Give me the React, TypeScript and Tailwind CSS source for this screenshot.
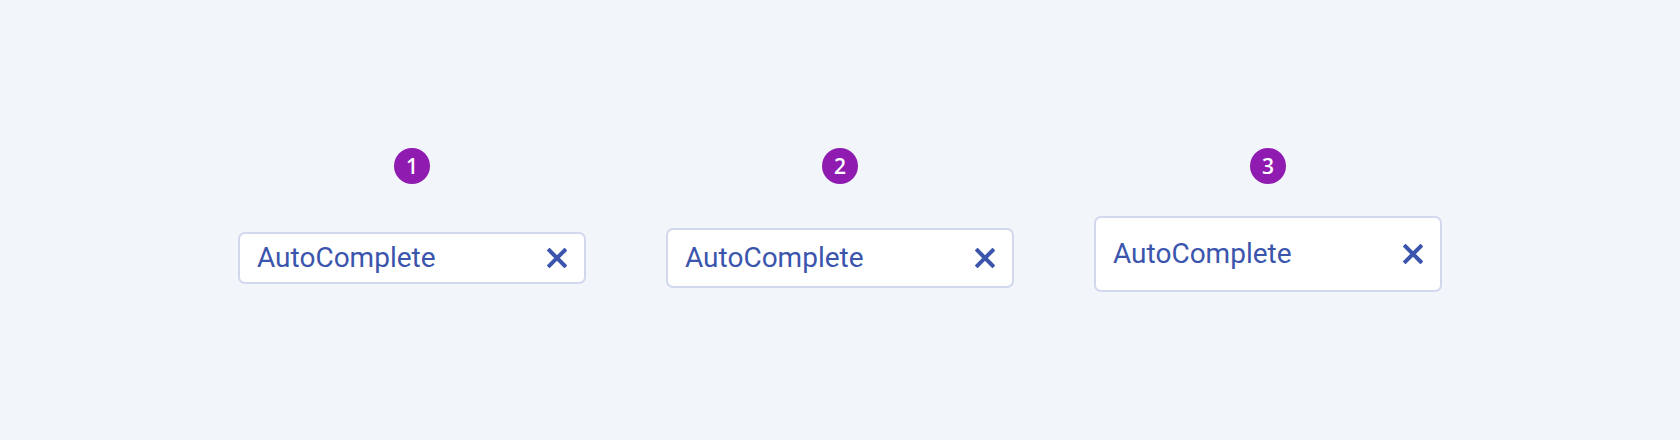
const items = [
  { n: 1, box: "mt-[48px] h-[52px]" },
  { n: 2, box: "mt-[44px] h-[60px]" },
  { n: 3, box: "mt-[32px] h-[76px]" },
];

const ClearIcon = () => (
  <svg width="20" height="20" viewBox="0 0 20 20" fill="none">
    <path d="M2.5 2.5L17.5 17.5M17.5 2.5L2.5 17.5" stroke="#3b55ad" strokeWidth="4" strokeLinecap="square" />
  </svg>
);

export default function App() {
  return (
    <div className="w-[1680px] h-[440px] bg-[#f2f5fa] flex justify-center pt-[148px]">
      {items.map((it) => (
        <div key={it.n} className="w-[428px] flex flex-col items-center">
          <div
            className="w-9 h-9 rounded-full bg-[#8f1bb1] text-white flex items-center justify-center text-[21px] leading-none font-semibold"
            style={{ fontFamily: '"Open Sans", sans-serif' }}
          >
            {it.n}
          </div>
          <div
            className={`${it.box} w-[348px] bg-white border-2 border-[#d2d8ec] rounded-[7px] flex items-center justify-between px-[17px]`}
          >
            <span
              className="text-[28px] leading-none text-[#3b55ad]"
              style={{ fontFamily: "Roboto, sans-serif" }}
            >
              AutoComplete
            </span>
            <ClearIcon />
          </div>
        </div>
      ))}
    </div>
  );
}
